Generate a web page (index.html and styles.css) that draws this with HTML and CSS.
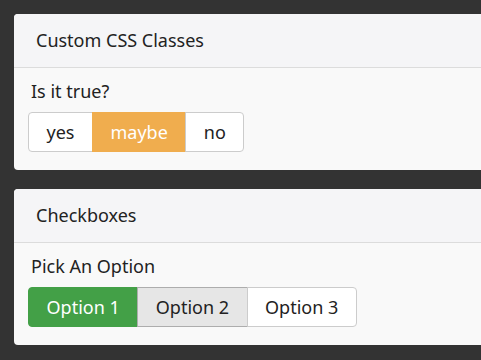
FILE: index.html
```html
<!DOCTYPE html>
<html lang="en">
  <head>
    <meta charset="UTF-8" />
    <title>Button groups</title>
    <link rel="stylesheet" href="styles.css">
  </head>
  <body>
    <div class="panel">
      <div class="panel-heading">Custom CSS Classes</div>
      <div class="panel-body">
        <p class="label">Is it true?</p>
        <div class="btn-group">
          <span class="btn">yes</span>
          <span class="btn btn-warning">maybe</span>
          <span class="btn">no</span>
        </div>
      </div>
    </div>
    <div class="panel">
      <div class="panel-heading">Checkboxes</div>
      <div class="panel-body">
        <p class="label">Pick An Option</p>
        <div class="btn-group">
          <span class="btn btn-success">Option 1</span>
          <span class="btn active">Option 2</span>
          <span class="btn">Option 3</span>
        </div>
      </div>
    </div>
  </body>
</html>
```

FILE: styles.css
```css
* {
  margin: 0;
  padding: 0;
  box-sizing: border-box;
}
body {
  background: #333333;
  padding: 14px 0 0 14px;
  font-family: "Noto Sans", "Open Sans", sans-serif;
  color: #222;
  overflow: hidden;
}
/* panel runs off the right edge, so only the left corners are rounded */
.panel {
  background: #f9f9f9;
  border-radius: 4px 0 0 4px;
  margin-bottom: 19px;
}
.panel-heading {
  height: 54px;
  line-height: 53px;
  padding-left: 22px;
  font-size: 18px;
  background: #f5f5f7;
  border-bottom: 1px solid #dcdcdc;
  border-radius: 4px 0 0 0;
}
.panel-body {
  padding: 10px 14px 18px;
}
.label {
  font-size: 18px;
  line-height: 26px;
  padding-left: 3px;
  margin-bottom: 8px;
}
.btn-group {
  display: flex;
}
.btn {
  height: 40px;
  line-height: 38px;
  padding: 0 17.5px;
  font-size: 18px;
  background: #fff;
  border: 1px solid #ccc;
  margin-left: -1px;
  color: #222;
}
.btn:first-child {
  margin-left: 0;
  border-radius: 4px 0 0 4px;
}
.btn:last-child {
  border-radius: 0 4px 4px 0;
}
.btn-warning {
  background: #f0ad4e;
  border-color: #f0ad4e;
  color: #fff;
}
.btn-success {
  background: #43a047;
  border-color: #43a047;
  color: #fff;
}
.btn.active {
  background: #e6e6e6;
  border-color: #adadad;
}
```
